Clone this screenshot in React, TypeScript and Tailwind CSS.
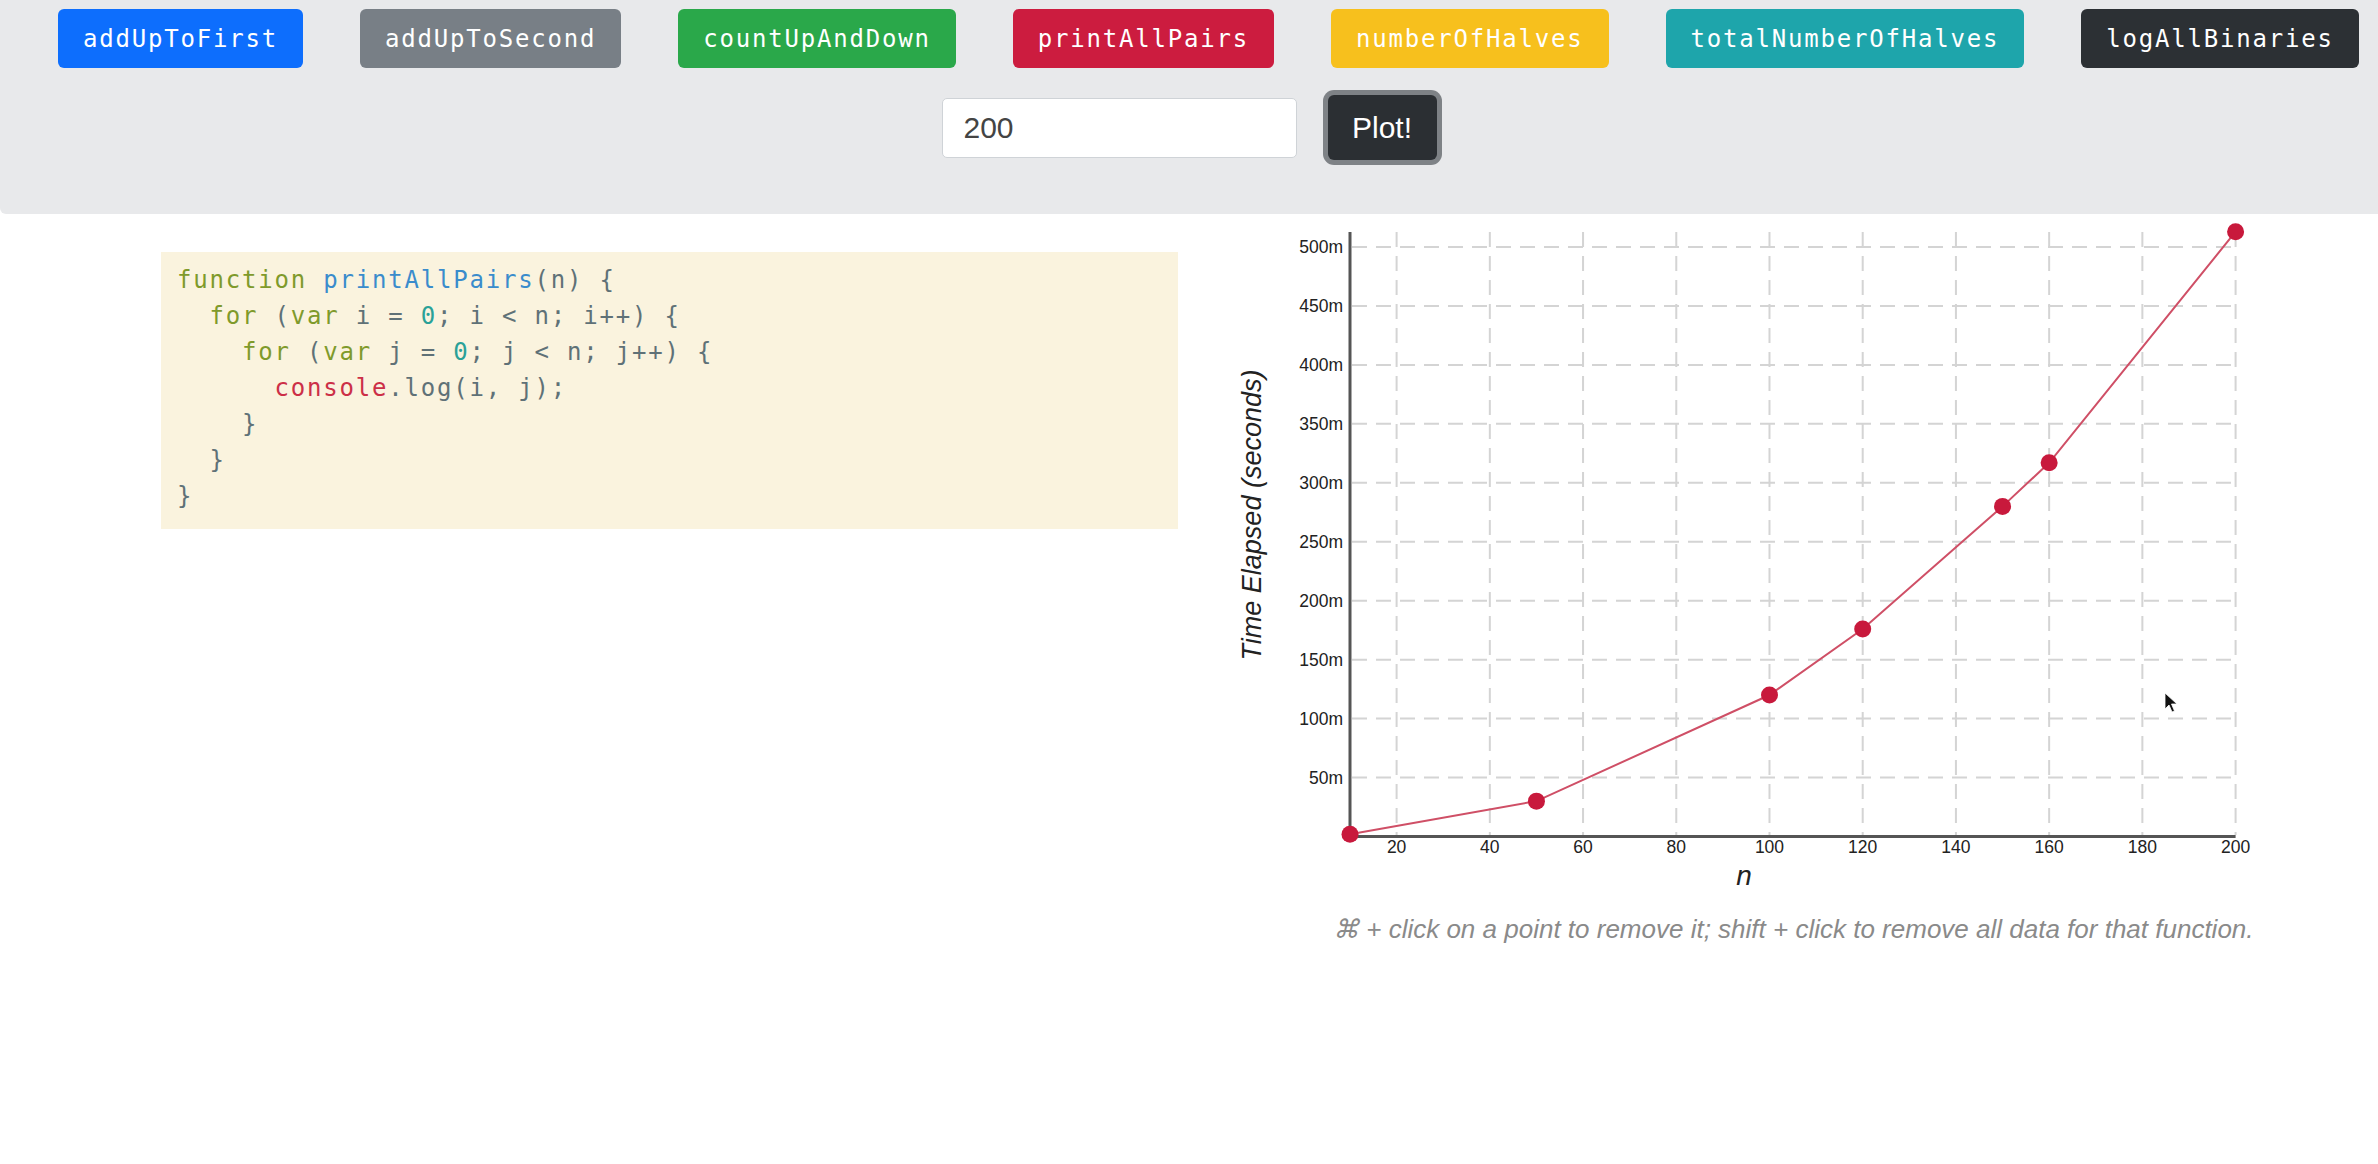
import React from 'react';

const buttons = [
  { label: 'addUpToFirst', cls: 'bg-[#0d6efd]' },
  { label: 'addUpToSecond', cls: 'bg-[#787f86]' },
  { label: 'countUpAndDown', cls: 'bg-[#2aa84a]' },
  { label: 'printAllPairs', cls: 'bg-[#cc1c3f]' },
  { label: 'numberOfHalves', cls: 'bg-[#f7c01d]' },
  { label: 'totalNumberOfHalves', cls: 'bg-[#1ea5ab]' },
  { label: 'logAllBinaries', cls: 'bg-[#2c3034]' },
];

// chart origin: svg sits at page x=1220, y=214
const X = (n: number) => 130 + (n - 10) * 4.661;
const Y = (v: number) => 622.5 - v * 1.179;

const data: [number, number][] = [
  [10, 2],
  [50, 30],
  [100, 120],
  [120, 176],
  [150, 280],
  [160, 317],
  [200, 513],
];

function Chart() {
  const pts = data.map(([n, v]) => [X(n), Y(v)] as [number, number]);
  const yTicks = [50, 100, 150, 200, 250, 300, 350, 400, 450, 500];
  const xTicks = [20, 40, 60, 80, 100, 120, 140, 160, 180, 200];
  return (
    <svg width="1080" height="700" className="block">
      {yTicks.map((v) => (
        <g key={v}>
          <line x1={132} x2={X(200)} y1={Y(v)} y2={Y(v)} stroke="#d4d4d4" strokeWidth="2" strokeDasharray="15 9" />
          <text x={123} y={Y(v) + 6.4} textAnchor="end" fontSize="17.5" fill="#222">
            {v}m
          </text>
        </g>
      ))}
      {xTicks.map((n) => (
        <g key={n}>
          <line x1={X(n)} x2={X(n)} y1={18} y2={621} stroke="#d4d4d4" strokeWidth="2" strokeDasharray="15 9" />
          <text x={X(n)} y={638.5} textAnchor="middle" fontSize="17.5" fill="#222">
            {n}
          </text>
        </g>
      ))}
      <line x1={130} x2={130} y1={18} y2={624} stroke="#555" strokeWidth="3" />
      <line x1={129} x2={X(200)} y1={622.5} y2={622.5} stroke="#555" strokeWidth="3" />
      <text
        transform="translate(34,301) rotate(-90)"
        textAnchor="middle"
        dominantBaseline="middle"
        fontSize="27"
        fontStyle="italic"
        fill="#222"
      >
        Time Elapsed (seconds)
      </text>
      <text x={524} y={671} textAnchor="middle" fontSize="28" fontStyle="italic" fill="#222">
        n
      </text>
      <polyline points={pts.map((p) => p.join(',')).join(' ')} fill="none" stroke="#cf4f66" strokeWidth="2" />
      {pts.map(([x, y], i) => (
        <circle key={i} cx={x} cy={y} r="8.5" fill="#c8193c" />
      ))}
      <path d="M945,479 L945,495 L949,491 L952,498 L954.5,497 L951.5,490 L957,490 Z" fill="#111" stroke="#fff" strokeWidth="0.8" />
    </svg>
  );
}

export default function App() {
  return (
    <div className="min-h-screen bg-white font-['Liberation_Sans',Arial,sans-serif]">
      <header className="h-[214px] bg-[#e8e9eb] rounded-bl-md pt-[9px]">
        <div className="flex gap-[57px] pl-[58px]">
          {buttons.map((b) => (
            <button
              key={b.label}
              className={`${b.cls} h-[59px] px-[25px] rounded-[6px] text-white text-[24px] tracking-[1.8px] font-['DejaVu_Sans_Mono',monospace]`}
            >
              {b.label}
            </button>
          ))}
        </div>
        <div className="flex justify-center items-center gap-[31px] mt-[27px]">
          <input
            defaultValue="200"
            className="w-[355px] h-[60px] rounded-[5px] border border-[#cfd3d7] bg-white pl-[21px] text-[30px] text-[#444] outline-none"
          />
          <button className="w-[109px] h-[65px] rounded-[6px] bg-[#2b2f33] text-white text-[30px] ring-[5px] ring-[#7e8286]">
            Plot!
          </button>
        </div>
      </header>
      <main className="flex">
        <div className="pl-[161px] pt-[38px]">
          <pre className="w-[1017px] h-[277px] bg-[#faf3de] pl-[16px] pt-[10px] text-[24px] leading-[36px] tracking-[1.8px] text-[#5f7177] font-['DejaVu_Sans_Mono',monospace]">
            <span className="text-[#7f9a2b]">function</span> <span className="text-[#3a8ccc]">printAllPairs</span>(n) {'{'}
            {'\n  '}
            <span className="text-[#7f9a2b]">for</span> (<span className="text-[#7f9a2b]">var</span> i = <span className="text-[#2aa198]">0</span>; i &lt; n; i++) {'{'}
            {'\n    '}
            <span className="text-[#7f9a2b]">for</span> (<span className="text-[#7f9a2b]">var</span> j = <span className="text-[#2aa198]">0</span>; j &lt; n; j++) {'{'}
            {'\n      '}
            <span className="text-[#cc2f47]">console</span>.log(i, j);
            {'\n    }\n  }\n}'}
          </pre>
        </div>
        <div className="ml-[42px]">
          <Chart />
          <p className="pl-[113px] leading-[30px] text-[26px] italic text-[#8a8a8a]">
            ⌘ + click on a point to remove it; shift + click to remove all data for that function.
          </p>
        </div>
      </main>
    </div>
  );
}
